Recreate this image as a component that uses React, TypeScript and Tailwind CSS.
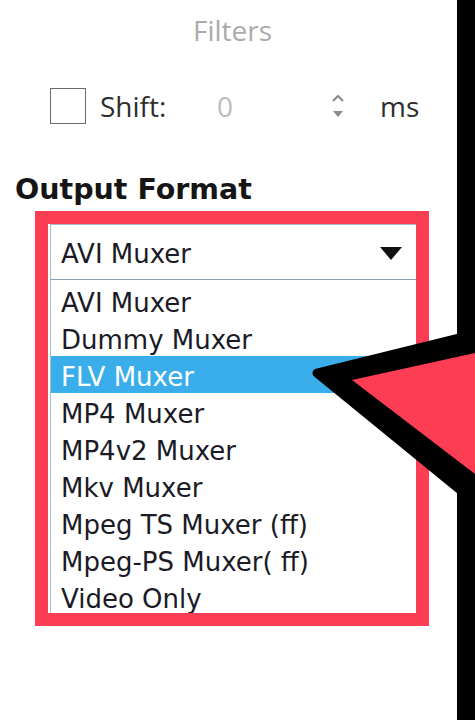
const muxers = [
  "AVI Muxer",
  "Dummy Muxer",
  "FLV Muxer",
  "MP4 Muxer",
  "MP4v2 Muxer",
  "Mkv Muxer",
  "Mpeg TS Muxer (ff)",
  "Mpeg-PS Muxer( ff)",
  "Video Only",
]

const selected = "FLV Muxer"

function Spinner() {
  return (
    <svg width="16" height="30" viewBox="0 0 16 30" className="text-[#8a8a8a]">
      <path d="M3 10 L8 5 L13 10" fill="none" stroke="currentColor" strokeWidth="2" />
      <path d="M3 20 L13 20 L8 26 Z" fill="currentColor" />
    </svg>
  )
}

export default function App() {
  return (
    <div className="relative w-[475px] h-[720px] overflow-hidden bg-white flex">
      {/* Settings panel */}
      <div className="w-[457px] h-full flex flex-col">
        <div className="h-[60px] flex items-center justify-center pl-[8px] font-['Open_Sans',sans-serif] text-[28px] leading-none text-[#ababab]">
          Filters
        </div>

        {/* Shift row */}
        <div className="mt-[28px] ml-[50px] h-[36px] flex items-center font-['Open_Sans',sans-serif] text-[28px] leading-none">
          <div className="w-[36px] h-[36px] border-[1.5px] border-[#6b6b6b] bg-white shrink-0" />
          <span className="ml-[14px] w-[117px] text-[#2e2e2e]">Shift:</span>
          <span className="w-[113px] text-[#bcbcbc]">0</span>
          <span className="w-[50px] flex items-center">
            <Spinner />
          </span>
          <span className="text-[#2e2e2e]">ms</span>
        </div>

        <div className="mt-[52px] ml-[15px] h-[28px] font-['DejaVu_Sans',sans-serif] font-bold text-[28.5px] leading-none text-[#151515]">
          Output Format
        </div>

        {/* Highlighted combo box */}
        <div className="mt-[7px] ml-[35px] w-[394px] h-[415px] border-[13px] border-[#fd3d54] bg-white">
          <div className="h-full ml-[2px] border-l border-t border-[#a8bccf] flex flex-col font-['DejaVu_Sans',sans-serif] text-[26px] leading-none text-[#1b1b28]">
            <div className="h-[55px] shrink-0 flex items-center justify-between pl-[10px] pr-[14px] pt-[3px] border-b border-[#8f9fb3]">
              <span>AVI Muxer</span>
              <svg width="22" height="13" viewBox="0 0 22 13">
                <path d="M0 0 L22 0 L11 13 Z" fill="#111" />
              </svg>
            </div>
            <div className="flex-1 overflow-hidden pt-[2px]">
              {muxers.map((m) => (
                <div
                  key={m}
                  className={
                    m === selected
                      ? "h-[37px] flex items-center pl-[10px] pt-[4px] bg-[#3aaeea] text-white"
                      : "h-[37px] flex items-center pl-[10px] pt-[4px]"
                  }
                >
                  {m}
                </div>
              ))}
            </div>
          </div>
        </div>
      </div>

      {/* Dark edge */}
      <div className="w-[18px] h-full bg-black" />

      {/* Pointer arrow overlay */}
      <svg className="absolute inset-0 pointer-events-none" width="475" height="720" viewBox="0 0 475 720">
        <polygon
          points="317,373 475,334 475,502"
          fill="#000"
          stroke="#000"
          strokeWidth="9"
          strokeLinejoin="round"
        />
        <polygon points="352,380 475,353 475,474" fill="#fd3d54" />
      </svg>
    </div>
  )
}
